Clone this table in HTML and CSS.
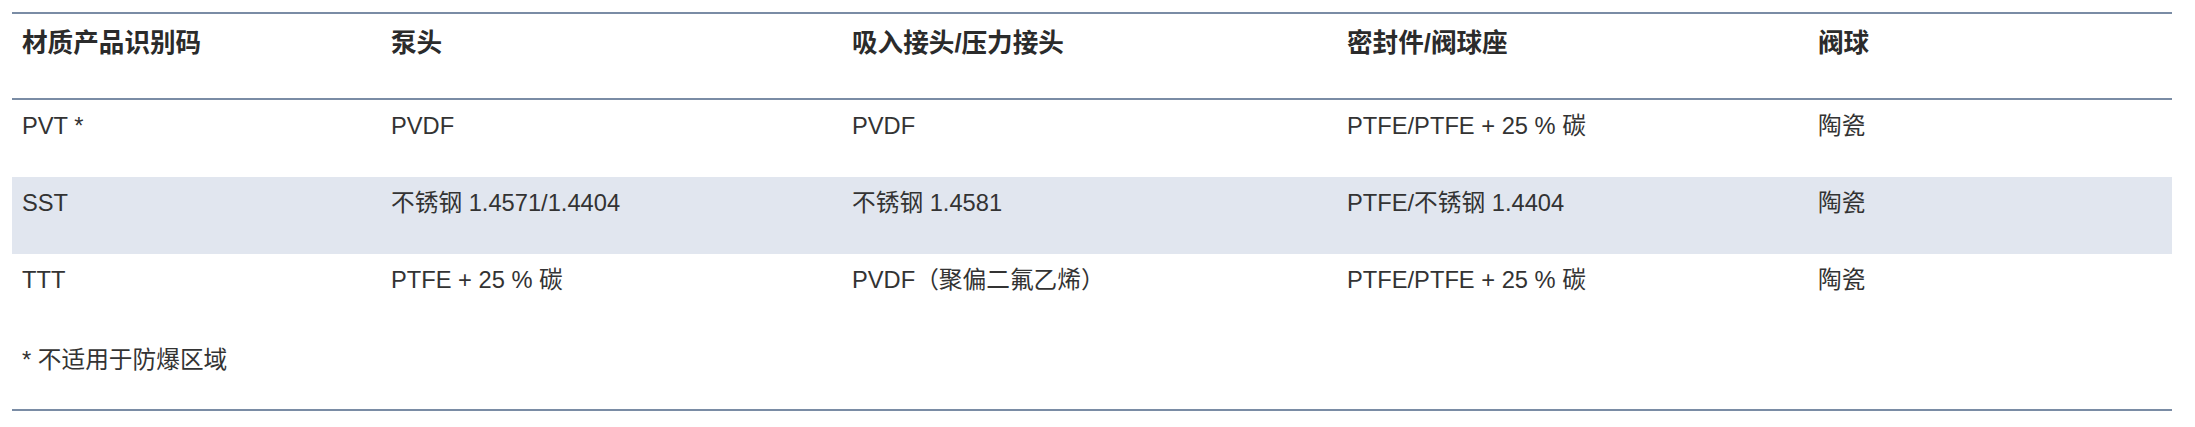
FILE: index.html
```html
<!DOCTYPE html>
<html lang="zh">
<head>
<meta charset="utf-8">
<title>材质产品识别码</title>
<link rel="stylesheet" href="styles.css">
</head>
<body>
<div class="wrap">
  <table class="spec">
    <colgroup>
      <col class="c1"><col class="c2"><col class="c3"><col class="c4"><col class="c5">
    </colgroup>
    <thead>
      <tr>
        <th>材质产品识别码</th>
        <th>泵头</th>
        <th>吸入接头/压力接头</th>
        <th>密封件/阀球座</th>
        <th>阀球</th>
      </tr>
    </thead>
    <tbody>
      <tr>
        <td>PVT *</td>
        <td>PVDF</td>
        <td>PVDF</td>
        <td>PTFE/PTFE + 25 % 碳</td>
        <td>陶瓷</td>
      </tr>
      <tr class="band">
        <td>SST</td>
        <td>不锈钢 1.4571/1.4404</td>
        <td>不锈钢 1.4581</td>
        <td>PTFE/不锈钢 1.4404</td>
        <td>陶瓷</td>
      </tr>
      <tr>
        <td>TTT</td>
        <td>PTFE + 25 % 碳</td>
        <td>PVDF（聚偏二氟乙烯）</td>
        <td>PTFE/PTFE + 25 % 碳</td>
        <td>陶瓷</td>
      </tr>
    </tbody>
    <tfoot>
      <tr>
        <td colspan="5" class="note">* 不适用于防爆区域</td>
      </tr>
    </tfoot>
  </table>
</div>
</body>
</html>
```

FILE: styles.css
```css
html, body {
  margin: 0;
  padding: 0;
  background: #ffffff;
}

body {
  font-family: "Liberation Sans", Arial, "Noto Sans CJK SC", sans-serif;
  color: #333333;
}

.wrap {
  padding: 12px 23px 0 12px;
}

.spec {
  width: 2160px;
  border-collapse: collapse;
  table-layout: fixed;
  border-top: 2px solid #7a8ca5;
  border-bottom: 2px solid #7a8ca5;
}

.c1 { width: 369px; }
.c2 { width: 461px; }
.c3 { width: 495px; }
.c4 { width: 471px; }
.c5 { width: 364px; }

.spec th {
  text-align: left;
  vertical-align: top;
  font-weight: bold;
  font-size: 25.6px;
  line-height: 36px;
  color: #2b2b2b;
  padding: 11px 10px 37px 10px;
  border-bottom: 2px solid #7a8ca5;
}

.spec td {
  text-align: left;
  vertical-align: top;
  font-size: 23.7px;
  line-height: 36px;
  padding: 8px 10px 33px 10px;
  white-space: nowrap;
}

.spec .band td {
  background: #e1e6ef;
}

.spec .note {
  padding: 11px 10px 31px 10px;
}
```
